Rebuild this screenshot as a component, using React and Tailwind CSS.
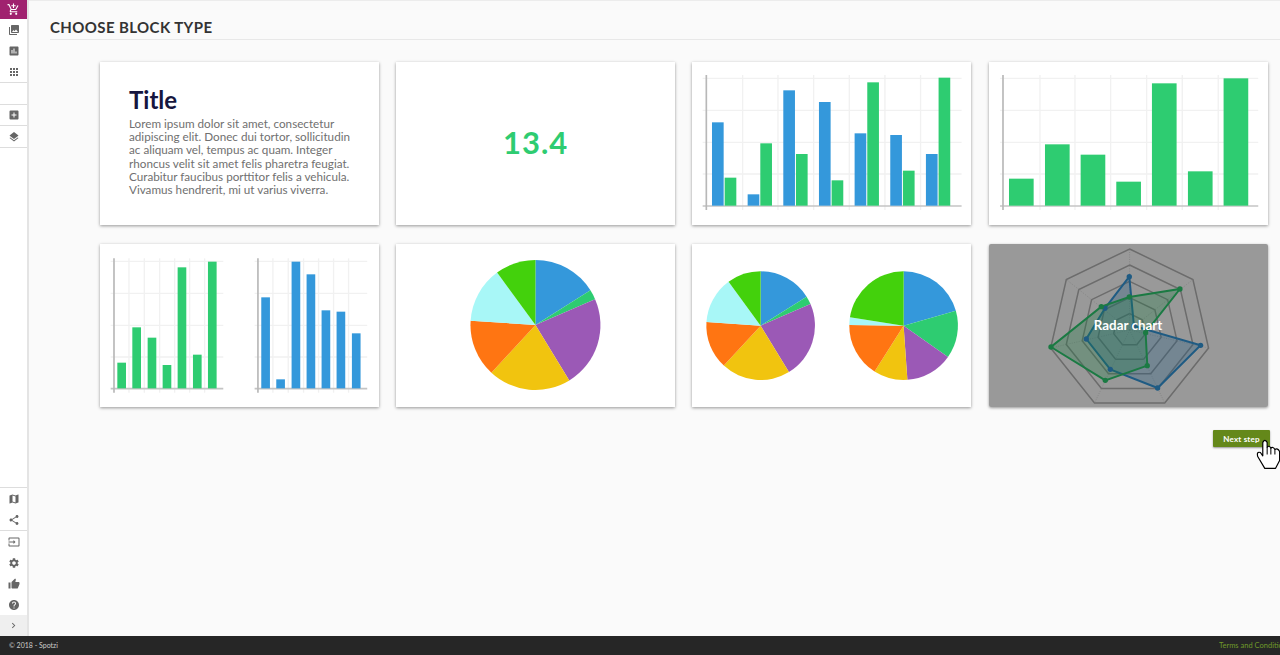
import { MdAddShoppingCart, MdPhotoLibrary, MdInsertChart, MdApps, MdAddBox, MdLayers, MdMap, MdShare, MdInput, MdSettings, MdThumbUp, MdHelp, MdChevronRight } from 'react-icons/md';

const BLUE = '#3498db';
const GREEN = '#2ecc71';
const PURPLE = '#9b59b6';
const YELLOW = '#f1c40f';
const ORANGE = '#ff7512';
const LIGHT = '#a8f7f7';
const LIME = '#43d10c';

const PIE_LEFT = [[57.8, BLUE], [66.6, GREEN], [148.6, PURPLE], [222.7, YELLOW], [273.8, ORANGE], [323.8, LIGHT], [360, LIME]];
const PIE_RIGHT = [[74.2, BLUE], [125.2, GREEN], [176, PURPLE], [212.3, YELLOW], [270.7, ORANGE], [278.9, LIGHT], [360, LIME]];

function Card({ children, className = '' }) {
  return <div className={`relative bg-white h-[163px] overflow-hidden shadow-[0_1px_3px_rgba(0,0,0,0.4)] ${className}`}>{children}</div>;
}

// drawn in the same units as the 3x crops, viewBox is the card's box
function Grid({ axisX, axisTop, axisBottom, axisY, left, right, hs, vs }) {
  return (
    <g>
      {hs.map(y => <line key={y} x1={left} x2={right} y1={y} y2={y} stroke="#f1f1f1" strokeWidth="4" />)}
      {vs.map(x => <line key={x} x1={x} x2={x} y1={axisTop} y2={axisBottom} stroke="#f1f1f1" strokeWidth="4" />)}
      <line x1={left} x2={right} y1={axisY} y2={axisY} stroke="#c4c4c4" strokeWidth="5" />
      <line x1={axisX} x2={axisX} y1={axisTop} y2={axisBottom} stroke="#b8b8b8" strokeWidth="5" />
    </g>
  );
}

function Bars({ xs, tops, width, bottom, color }) {
  return xs.map((x, i) => <rect key={x} x={x} y={tops[i]} width={width} height={bottom - tops[i]} fill={color} />);
}

function Pie({ cx, cy, r, slices }) {
  let from = 0;
  const pt = a => {
    const t = (a - 90) * Math.PI / 180;
    return `${(cx + r * Math.cos(t)).toFixed(2)} ${(cy + r * Math.sin(t)).toFixed(2)}`;
  };
  return slices.map(([to, color]) => {
    const d = `M${cx} ${cy} L${pt(from)} A${r} ${r} 0 ${to - from > 180 ? 1 : 0} 1 ${pt(to)} Z`;
    from = to;
    return <path key={color} d={d} fill={color} />;
  });
}

function heptagon(r, cx = 434, cy = 270) {
  return [0, 1, 2, 3, 4, 5, 6].map(k => {
    const t = (-90 + k * 360 / 7) * Math.PI / 180;
    return `${(cx + r * Math.cos(t)).toFixed(1)},${(cy + r * Math.sin(t)).toFixed(1)}`;
  }).join(' ');
}

const RADAR_BLUE = [[433, 110], [447, 258], [647, 316], [518, 444], [376, 388], [304, 297], [360, 205]];
const RADAR_GREEN = [[433, 171], [585, 147], [482, 278], [487, 377], [361, 421], [198, 321], [349, 200]];

function Radar() {
  return (
    <svg viewBox="12 12 837 489" preserveAspectRatio="none" className="w-full h-full block">
      {[243, 195, 146, 97, 49].map(r => <polygon key={r} points={heptagon(r)} fill="none" stroke="#b4b4b4" strokeWidth="4.5" />)}
      {heptagon(243).split(' ').map(p => {
        const [x, y] = p.split(',');
        return <line key={p} x1="434" y1="270" x2={x} y2={y} stroke="#d0d0d0" strokeWidth="2" strokeDasharray="3 4" />;
      })}
      <polygon points={RADAR_BLUE.join(' ')} fill={BLUE} fillOpacity="0.3" stroke={BLUE} strokeWidth="6" />
      <polygon points={RADAR_GREEN.join(' ')} fill={GREEN} fillOpacity="0.3" stroke={GREEN} strokeWidth="6" />
      {RADAR_BLUE.map(([x, y]) => <circle key={x} cx={x} cy={y} r="8" fill={BLUE} />)}
      {RADAR_GREEN.map(([x, y]) => <circle key={x} cx={x} cy={y} r="8" fill={GREEN} />)}
    </svg>
  );
}

function Hand() {
  return (
    <svg viewBox="813 593 72 92" className="absolute left-[43px] top-[8px] w-[25px] h-[31px]">
      <path d="M832 606 Q838 594 845 606 L845 621 Q851 613 856 623 Q862 617 868 627 Q876 622 882 633 L882 660 L870 683 L838 683 L817 648 Q813 632 825 636 L832 646 Z" fill="#fff" stroke="#000" strokeWidth="3.5" strokeLinejoin="round" />
      <path d="M845 621 L845 642 M856 623 L856 642 M868 627 L868 642" stroke="#000" strokeWidth="3" fill="none" />
    </svg>
  );
}

function NavIcon({ icon: Icon, size = 12 }) {
  return (
    <div className="h-[21px] flex items-center justify-center text-[#666]">
      <Icon size={size} />
    </div>
  );
}

function Sidebar() {
  return (
    <div className="w-[29px] shrink-0 bg-white border-r-2 border-[#e4e4e4] flex flex-col">
      <div className="h-[19px] bg-[#a0226f] flex items-center justify-center text-white">
        <MdAddShoppingCart size={13} />
      </div>
      <div className="border-b border-[#ddd]">
        <NavIcon icon={MdPhotoLibrary} />
        <NavIcon icon={MdInsertChart} />
        <NavIcon icon={MdApps} />
      </div>
      <div className="h-[22px] border-b border-[#ddd]" />
      <div className="h-[21px] border-b border-[#ddd] flex items-center justify-center text-[#666]"><MdAddBox size={12} /></div>
      <div className="h-[22px] border-b border-[#ddd] flex items-center justify-center text-[#666]"><MdLayers size={12} /></div>
      <div className="mt-auto border-t border-[#ddd]">
        <NavIcon icon={MdMap} />
        <NavIcon icon={MdShare} />
      </div>
      <div className="border-t border-[#ddd]">
        <NavIcon icon={MdInput} />
        <NavIcon icon={MdSettings} />
        <NavIcon icon={MdThumbUp} />
        <NavIcon icon={MdHelp} />
      </div>
      <div className="h-[21px] bg-[#efefef] flex items-center justify-center text-[#666]">
        <MdChevronRight size={11} />
      </div>
    </div>
  );
}

export default function App() {
  return (
    <div className="h-[655px] w-[1280px] overflow-hidden flex flex-col bg-[#fafafa] font-['Lato','Liberation_Sans',sans-serif]">
      <div className="flex flex-1 min-h-0">
        <Sidebar />
        <div className="flex-1 min-w-0 flex flex-col border-t border-[#ececec]">
          <div className="ml-[21px] h-[39px] border-b border-[#e8e8e8] pt-[16px]">
            <h1 className="text-[15px] leading-[20px] font-bold tracking-[0.4px] text-[#333]">CHOOSE BLOCK TYPE</h1>
          </div>
          <div className="ml-[71px] mr-[12.5px] mt-[22px] grid grid-cols-4 gap-x-[17.3px] gap-y-[19px]">
            <Card className="pl-[29px] pt-[24px]">
              <h2 className="text-[24px] leading-[28px] font-bold text-[#16163f]">Title</h2>
              <p className="mt-[3px] whitespace-nowrap text-[11.7px] leading-[13.2px] text-[#707070]">
                Lorem ipsum dolor sit amet, consectetur<br />
                adipiscing elit. Donec dui tortor, sollicitudin<br />
                ac aliquam vel, tempus ac quam. Integer<br />
                rhoncus velit sit amet felis pharetra feugiat.<br />
                Curabitur faucibus porttitor felis a vehicula.<br />
                Vivamus hendrerit, mi ut varius viverra.
              </p>
            </Card>
            <Card className="flex items-center justify-center pb-[2px]">
              <span className="text-[31px] font-bold tracking-[1px] text-[#2ecc71]">13.4</span>
            </Card>
            <Card>
              <svg viewBox="6 21 837 489" preserveAspectRatio="none" className="w-full h-full block">
                <Grid axisX={49} axisTop={60} axisBottom={465} axisY={453} left={38} right={815} hs={[70, 166, 262, 357]} vs={[158, 264, 371, 478, 585, 692]} />
                <Bars xs={[66, 173, 280, 387, 494, 601, 708]} tops={[202, 418, 106, 141, 235, 240, 297]} width={35} bottom={452} color={BLUE} />
                <Bars xs={[104, 211, 318, 425, 532, 639, 746]} tops={[368, 265, 297, 376, 82, 347, 68]} width={35} bottom={452} color={GREEN} />
              </svg>
            </Card>
            <Card>
              <svg viewBox="12 21 837 489" preserveAspectRatio="none" className="w-full h-full block">
                <Grid axisX={54} axisTop={60} axisBottom={465} axisY={453} left={45} right={820} hs={[70, 166, 262, 357]} vs={[165, 270, 377, 485, 592, 700]} />
                <Bars xs={[72, 180, 287, 394, 501, 609, 716]} tops={[371, 268, 299, 380, 85, 349, 70]} width={74} bottom={452} color={GREEN} />
              </svg>
            </Card>
            <Card>
              <svg viewBox="15 12 837 489" preserveAspectRatio="none" className="w-full h-full block">
                <Grid axisX={57} axisTop={55} axisBottom={458} axisY={446} left={47} right={385} hs={[64, 160, 256, 351]} vs={[102, 148, 194, 239, 284, 329]} />
                <Bars xs={[67, 112, 158, 203, 248, 294, 339]} tops={[368, 262, 293, 375, 82, 344, 65]} width={26} bottom={445} color={GREEN} />
                <Grid axisX={489} axisTop={55} axisBottom={458} axisY={446} left={479} right={817} hs={[64, 160, 256, 351]} vs={[534, 580, 626, 671, 716, 761]} />
                <Bars xs={[499, 544, 590, 635, 680, 725, 771]} tops={[172, 418, 65, 103, 211, 215, 280]} width={26} bottom={445} color={BLUE} />
              </svg>
            </Card>
            <Card>
              <svg viewBox="0 0 279 163" className="w-full h-full block">
                <Pie cx={139.5} cy={81} r={65} slices={PIE_LEFT} />
              </svg>
            </Card>
            <Card>
              <svg viewBox="6 12 837 489" preserveAspectRatio="none" className="w-full h-full block">
                <Pie cx={212} cy={257} r={163} slices={PIE_LEFT} />
                <Pie cx={641} cy={257} r={163} slices={PIE_RIGHT} />
              </svg>
            </Card>
            <Card className="rounded-[2px]">
              <Radar />
              <div className="absolute inset-0 bg-black/40 flex items-center justify-center">
                <span className="text-[13.4px] font-bold text-white">Radar chart</span>
              </div>
            </Card>
          </div>
          <div className="flex justify-end mt-[23px] pr-[10px]">
            <div className="relative">
              <button className="block w-[57px] h-[17px] rounded-[1px] bg-[#64881a] text-white text-[8px] font-bold tracking-[0.2px] shadow-[0_1px_2px_rgba(0,0,0,0.4)]">Next step</button>
              <Hand />
            </div>
          </div>
        </div>
      </div>
      <div className="h-[19px] shrink-0 bg-[#262626] flex items-center justify-between pl-[9px]">
        <span className="text-[7px] text-[#ccc]">© 2018 - Spotzi</span>
        <span className="w-[61px] overflow-hidden whitespace-nowrap text-[7.5px] text-[#6f9a2a]">Terms and Conditions</span>
      </div>
    </div>
  );
}
